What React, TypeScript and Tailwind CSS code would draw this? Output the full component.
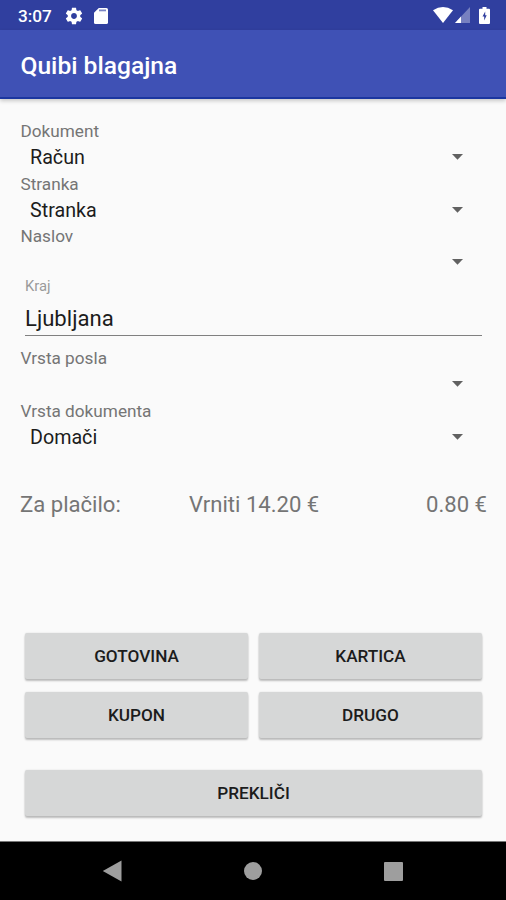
import React from 'react';

interface SpinnerFieldProps {
  label: string;
  value?: string;
}

const SpinnerField: React.FC<SpinnerFieldProps> = ({ label, value }) => (
  <div className="h-[52.7px]">
    <div className="h-[23px] pl-[0.5px] text-[17.2px] leading-[23px] text-[#757575]">{label}</div>
    <button className="flex h-[29.7px] w-full items-center justify-between pl-[10px] pr-[24px] text-left text-[19.7px] leading-[29px] text-[#1c1c1c]">
      <span>{value}</span>
      <svg className="mb-[2px] h-[6px] w-[11px]" viewBox="0 0 11 6" fill="#616161">
        <path d="M0 0h11L5.500 5.800z" />
      </svg>
    </button>
  </div>
);

const ActionButton: React.FC<{ label: string }> = ({ label }) => (
  <button className="flex h-[46px] w-full items-center justify-center rounded-[2px] bg-[#d6d7d7] pt-[2px] text-[17.2px] font-medium leading-none text-[#1c1c1c] shadow-[0_2px_2px_rgba(0,0,0,0.24),0_0_2px_rgba(0,0,0,0.12)]">
    {label}
  </button>
);

const StatusBar: React.FC = () => (
  <div className="flex h-[30px] items-center bg-[#303f9f] pl-[18px] pr-[16px] text-white">
    <span className="w-[46px] pt-[2px] text-[17.2px] font-medium leading-[30px]">3:07</span>
    {/* Settings */}
    <svg className="mt-[1px] h-[20px] w-[20px]" viewBox="0 0 24 24" fill="currentColor">
      <path d="M19.43 12.98c.04-.32.07-.64.07-.98s-.03-.66-.07-.98l2.11-1.65c.19-.15.24-.42.12-.64l-2-3.46c-.12-.22-.39-.3-.61-.22l-2.49 1c-.52-.4-1.08-.73-1.69-.98l-.38-2.65C14.46 2.18 14.25 2 14 2h-4c-.25 0-.46.18-.49.42l-.38 2.65c-.61.25-1.17.59-1.69.98l-2.49-1c-.23-.09-.49 0-.61.22l-2 3.46c-.13.22-.07.49.12.64l2.11 1.65c-.04.32-.07.65-.07.98s.03.66.07.98l-2.11 1.65c-.19.15-.24.42-.12.64l2 3.46c.12.22.39.3.61.22l2.49-1c.52.4 1.08.73 1.69.98l.38 2.65c.03.24.24.42.49.42h4c.25 0 .46-.18.49-.42l.38-2.65c.61-.25 1.17-.59 1.69-.98l2.49 1c.23.09.49 0 .61-.22l2-3.46c.12-.22.07-.49-.12-.64l-2.11-1.65zM12 15.5c-1.93 0-3.5-1.57-3.5-3.5s1.57-3.5 3.5-3.5 3.5 1.57 3.5 3.5-1.57 3.5-3.5 3.5z" />
    </svg>
    {/* SD card */}
    <svg className="ml-[10px] mt-[1px] h-[16px] w-[14px]" viewBox="0 0 14 16">
      <path d="M4.8 0H12.4Q14 0 14 1.6V14.4Q14 16 12.4 16H1.6Q0 16 0 14.4V4.8z" fill="#fff" />
      <path d="M5 1.500h7v1.800H5z" fill="#7c86c4" />
    </svg>
    <div className="ml-auto flex items-center">
      <svg className="h-[16px] w-[20px]" viewBox="0 0 20 16" fill="#fff">
        <path d="M0 3.3Q10-3.2 20 3.3L10 16z" />
      </svg>
      <svg className="ml-[2px] h-[16px] w-[15px]" viewBox="0 0 15 16">
        <path d="M15 0V16H0z" fill="#7780c0" />
        <path d="M6 9.6V16H0z" fill="#fff" />
      </svg>
      <svg className="ml-[9px] h-[17px] w-[11px]" viewBox="0 0 11 17">
        <path d="M3.5 0h4v1.7H10q1 0 1 1V16q0 1-1 1H1q-1 0-1-1V2.7q0-1 1-1h2.5z" fill="#fff" />
        <path d="M6.2 4.5L3.5 9.500h1.700v4L7.700 8.300H6.200z" fill="#303f9f" />
      </svg>
    </div>
  </div>
);

const NavigationBar: React.FC = () => (
  <div className="flex h-[59px] items-center justify-between border-t border-[#777] bg-black pl-[102px] pr-[103px]">
    <svg className="h-[22px] w-[20px]" viewBox="0 0 20 22" fill="#9e9e9e">
      <path d="M0.8 11L19.500 0.500v21z" />
    </svg>
    <div className="h-[18px] w-[18px] rounded-full bg-[#9e9e9e]" />
    <div className="h-[19px] w-[19px] rounded-[1px] bg-[#9e9e9e]" />
  </div>
);

const App: React.FC = () => {
  return (
    <div className="flex h-[900px] w-[506px] flex-col overflow-hidden bg-[#fafafa] font-['Roboto',sans-serif]">
      <StatusBar />
      <header className="flex h-[69px] items-center border-b-2 border-[#1b36a0] bg-[#3f51b5] pl-[20.5px] pt-[6px] shadow-[0_2px_4px_rgba(0,0,0,0.2)]">
        <h1 className="text-[24.6px] font-medium text-white">Quibi blagajna</h1>
      </header>

      <main className="flex flex-1 flex-col pl-[20px] pr-[19px] pt-[21px]">
        <SpinnerField label="Dokument" value="Račun" />
        <SpinnerField label="Stranka" value="Stranka" />
        <SpinnerField label="Naslov" />

        {/* City input with floating label */}
        <div className="mx-[5px] h-[69px]">
          <div className="h-[22px] text-[14.8px] leading-[17px] text-[#9a9a9a]">Kraj</div>
          <div className="h-[36px] border-b border-[#808080] pt-[1px] text-[22.1px] leading-[35px] text-[#1c1c1c]">Ljubljana</div>
        </div>

        <SpinnerField label="Vrsta posla" />
        <SpinnerField label="Vrsta dokumenta" value="Domači" />

        <div className="mt-[38px] flex text-[22.1px] leading-[29px] text-[#757575]">
          <span className="w-[169px]">Za plačilo:</span>
          <span>Vrniti 14.20 €</span>
          <span className="ml-auto">0.80 €</span>
        </div>

        <div className="mx-[5px] mb-[25px] mt-auto">
          <div className="grid grid-cols-2 gap-x-[11px] gap-y-[13px]">
            <ActionButton label="GOTOVINA" />
            <ActionButton label="KARTICA" />
            <ActionButton label="KUPON" />
            <ActionButton label="DRUGO" />
          </div>
          <div className="mt-[32px]">
            <ActionButton label="PREKLIČI" />
          </div>
        </div>
      </main>

      <NavigationBar />
    </div>
  );
};

export default App;
